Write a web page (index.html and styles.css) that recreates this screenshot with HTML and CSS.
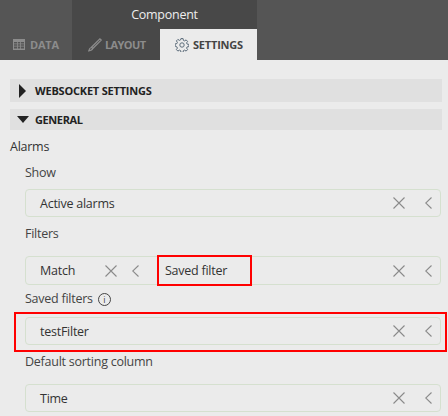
FILE: index.html
```html
<!DOCTYPE html>
<html lang="en">
  <head>
    <meta charset="UTF-8" />
    <title>Component settings</title>
    <link rel="stylesheet" href="styles.css">
  </head>
  <body>
    <svg width="0" height="0" class="defs">
      <symbol id="i-clear" viewBox="0 0 12 12">
        <path d="M.5.5l11 11M11.5.5l-11 11" fill="none" stroke="#8a8a8a" stroke-width="1.1" />
      </symbol>
      <symbol id="i-back" viewBox="0 0 7 12">
        <path d="M6.5.5L.7 6l5.8 5.5" fill="none" stroke="#8a8a8a" stroke-width="1.1" />
      </symbol>
    </svg>

    <div class="header">
      <div class="tab tab-data">
        <svg class="tab-icon" width="12" height="11" viewBox="0 0 12 11">
          <path fill="#8c8c8c" d="M0 0h12v11H0z" />
          <path fill="#555" d="M1 3h3v1.500H1zM4.800 3h2.400v1.500H4.800zM8 3h3v1.500H8zM1 5.300h3v1.500H1zM4.800 5.300h2.400v1.500H4.800zM8 5.300h3v1.500H8zM1 7.600h3V9.500H1zM4.800 7.600h2.400V9.500H4.800zM8 7.600h3V9.500H8z" />
        </svg>
        DATA
      </div>
      <div class="header-mid">
        <div class="title">Component</div>
        <div class="tabs">
          <div class="tab tab-layout">
            <svg class="tab-icon" width="16" height="16" viewBox="0 0 18 18">
              <path fill="none" stroke="#8c8c8c" stroke-width="1.4" d="M5 11.500L14.500 2l1.500 1.500L6.500 13zM5 11.500c-1.500.5-2.500 1.500-3 4 2.500-.3 4-1 4.500-2.500" />
            </svg>
            LAYOUT
          </div>
          <div class="tab tab-settings">
            <svg class="tab-icon" width="14" height="14" viewBox="0 0 14 14">
              <circle cx="7" cy="7" r="2.200" fill="none" stroke="#5b6b7a" stroke-width="1" />
              <path fill="none" stroke="#5b6b7a" stroke-width="1" d="M5.900.6h2.200l.3 1.800 1.200.5 1.500-1 1.500 1.500-1 1.500.5 1.200 1.800.3v2.200l-1.800.3-.5 1.200 1 1.500-1.500 1.500-1.500-1-1.200.5-.3 1.800H5.900l-.3-1.800-1.200-.5-1.500 1-1.500-1.500 1-1.500-.5-1.200L.1 8.100V5.900l1.800-.3.500-1.200-1-1.500 1.500-1.500 1.500 1 1.200-.5z" />
            </svg>
            SETTINGS
          </div>
        </div>
      </div>
      <div class="header-right"></div>
    </div>

    <div class="content">
      <div class="section section-ws">
        <span class="arrow-right"></span>
        WEBSOCKET SETTINGS
      </div>
      <div class="section section-general">
        <span class="arrow-down"></span>
        GENERAL
      </div>

      <div class="group-label">Alarms</div>
      <div class="fields">
        <label class="lbl lbl-show">Show</label>
        <div class="select select-show">
          <span class="value">Active alarms</span>
          <svg class="x" width="12" height="12"><use href="#i-clear" /></svg>
          <svg class="back" width="7" height="12"><use href="#i-back" /></svg>
        </div>

        <label class="lbl lbl-filters">Filters</label>
        <div class="select select-filter">
          <div class="part-left">
            <span class="value">Match</span>
            <svg class="x" width="12" height="12"><use href="#i-clear" /></svg>
            <svg class="back" width="7" height="12"><use href="#i-back" /></svg>
          </div>
          <span class="value value-saved">Saved filter</span>
          <svg class="x" width="12" height="12"><use href="#i-clear" /></svg>
          <svg class="back" width="7" height="12"><use href="#i-back" /></svg>
          <div class="mark mark-saved"></div>
        </div>

        <label class="lbl lbl-saved">
          Saved filters
          <span class="info">i</span>
        </label>
        <div class="select select-saved">
          <span class="value">testFilter</span>
          <svg class="x" width="12" height="12"><use href="#i-clear" /></svg>
          <svg class="back" width="7" height="12"><use href="#i-back" /></svg>
          <div class="mark mark-row"></div>
        </div>

        <label class="lbl lbl-sort">Default sorting column</label>
        <div class="select select-sort">
          <span class="value">Time</span>
          <svg class="x" width="12" height="12"><use href="#i-clear" /></svg>
          <svg class="back" width="7" height="12"><use href="#i-back" /></svg>
        </div>
      </div>
    </div>
  </body>
</html>
```

FILE: styles.css
```css
* {
  box-sizing: border-box;
  margin: 0;
  padding: 0;
}

body {
  width: 448px;
  height: 416px;
  overflow: hidden;
  background: #ebebeb;
  color: #333;
  font-family: "Open Sans", "Noto Sans", sans-serif;
  font-size: 12.5px;
  letter-spacing: -0.25px;
}

.defs {
  position: absolute;
}

/* Header */
.header {
  display: flex;
  height: 60px;
  background: #555;
}

.header-mid {
  width: 185px;
  background: #484848;
}

.header-right {
  flex: 1;
}

.title {
  height: 29px;
  padding-top: 6px;
  text-align: center;
  color: #eee;
  font-size: 12.5px;
}

.tabs {
  display: flex;
  height: 31px;
}

.tab {
  display: flex;
  align-items: center;
  font-size: 11px;
  font-weight: 700;
  letter-spacing: -0.2px;
  color: #8c8c8c;
}

.tab-data {
  width: 72px;
  height: 31px;
  margin-top: 29px;
  padding-left: 13px;
  gap: 5px;
}

.tab-layout {
  width: 88px;
  padding-left: 15px;
  gap: 2px;
  letter-spacing: -0.6px;
}

.tab-settings {
  width: 97px;
  padding-left: 15px;
  gap: 4px;
  background: #ebebeb;
  color: #444;
}

/* Collapsible sections */
.content {
  padding: 19px 6px 0 10px;
}

.section {
  display: flex;
  align-items: center;
  background: #e0e0e0;
  color: #222;
  font-size: 11px;
  font-weight: 700;
  letter-spacing: -0.2px;
}

.section-ws {
  height: 23px;
  padding-left: 9px;
  gap: 9px;
}

.section-general {
  height: 21px;
  margin-top: 7px;
  padding-left: 7px;
  gap: 6px;
  letter-spacing: -0.4px;
}

.arrow-right {
  width: 0;
  height: 0;
  border-left: 7px solid #222;
  border-top: 7px solid transparent;
  border-bottom: 7px solid transparent;
}

.arrow-down {
  width: 0;
  height: 0;
  border-top: 7px solid #222;
  border-left: 6px solid transparent;
  border-right: 6px solid transparent;
}

/* Form */
.group-label {
  margin-top: 8px;
  line-height: 18px;
  color: #333;
}

.fields {
  padding-left: 15px;
}

.lbl {
  display: flex;
  align-items: center;
  gap: 5px;
  line-height: 18px;
  color: #444;
}

.lbl-show {
  margin-top: 8px;
}

.lbl-filters {
  margin-top: 8px;
}

.lbl-saved {
  margin-top: 5px;
}

.lbl-sort {
  margin-top: 8px;
}

.select {
  position: relative;
  display: flex;
  align-items: center;
  width: 416px;
  height: 28px;
  padding: 0 8px 0 14px;
  border: 1px solid #d5e0cf;
  border-radius: 4px;
  color: #333;
}

.select .value {
  flex: 1;
}

.select .x {
  margin-right: 20px;
}

.select-show {
  margin-top: 7px;
}

.select-filter {
  height: 29px;
  margin-top: 13px;
}

.select-saved {
  margin-top: 9px;
}

.select-sort {
  margin-top: 13px;
}

.part-left {
  display: flex;
  align-items: center;
  width: 99px;
}

.select .value-saved {
  padding-left: 26px;
}

.select .part-left .x {
  margin-right: 15px;
}

.info {
  display: inline-flex;
  align-items: center;
  justify-content: center;
  width: 13px;
  height: 13px;
  border: 1px solid #444;
  border-radius: 50%;
  font-size: 9px;
  line-height: 1;
}

/* Red highlight marks drawn over the form */
.mark {
  position: absolute;
  border: 2px solid #f00;
}

.mark-saved {
  left: 131px;
  top: -2px;
  width: 95px;
  height: 31px;
}

.mark-row {
  left: -12px;
  top: -6px;
  width: 433px;
  height: 40px;
}
```
